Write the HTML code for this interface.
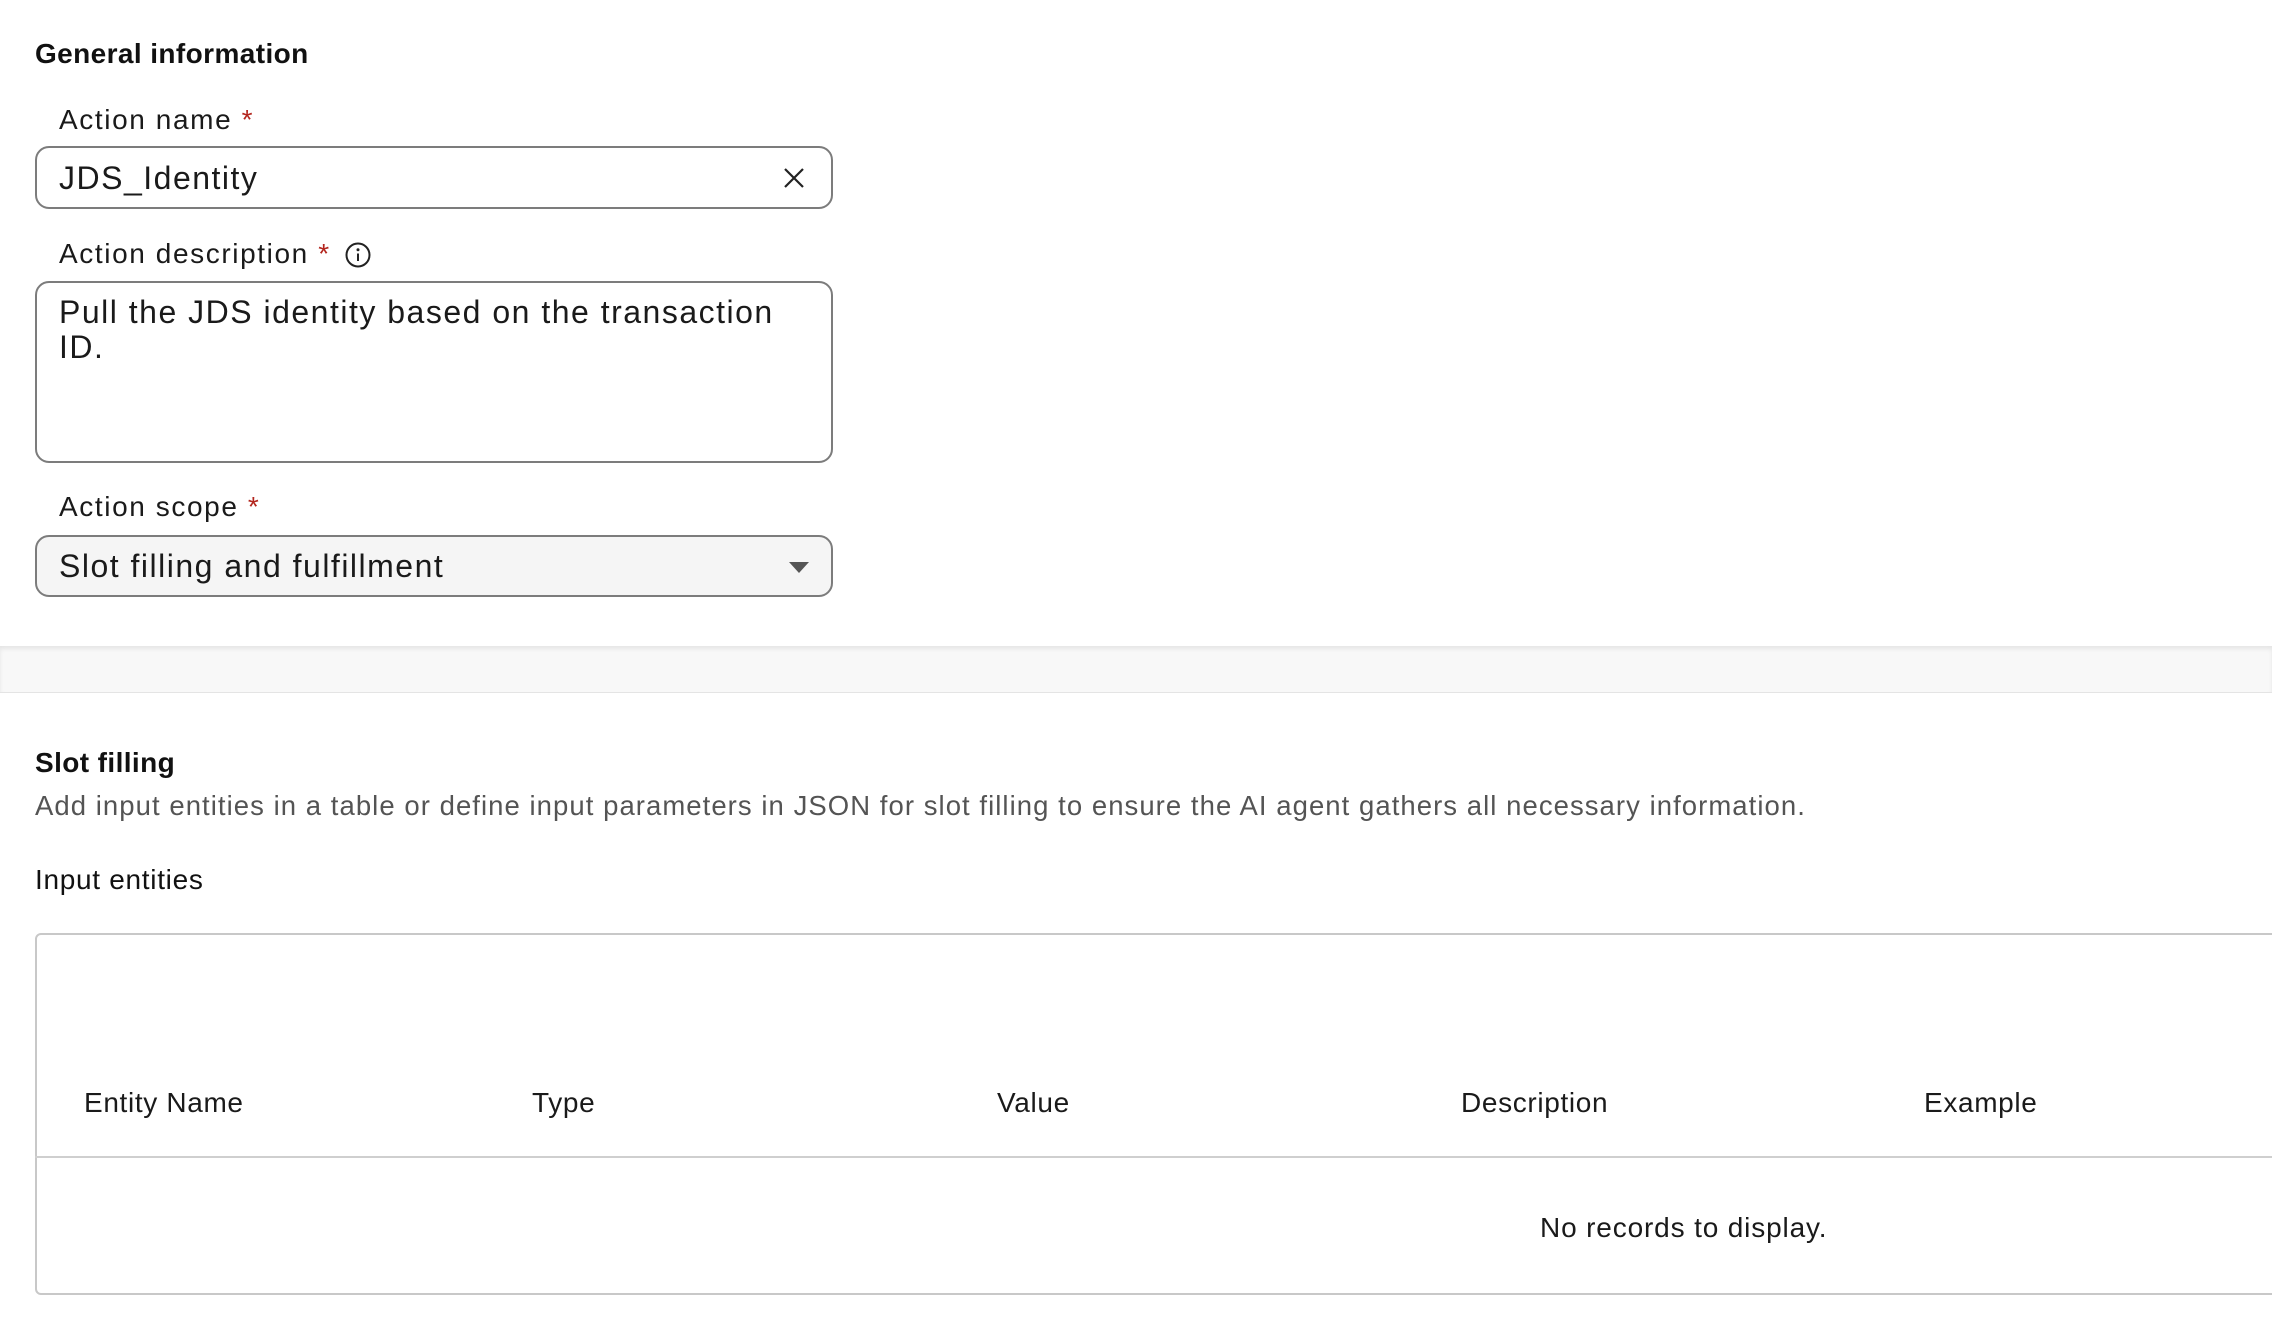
<!DOCTYPE html>
<html><head><meta charset="utf-8"><style>
*{box-sizing:border-box;margin:0;padding:0}
body{width:2272px;height:1332px;overflow:hidden;background:#fff;font-family:"Liberation Sans",sans-serif;color:#111;position:relative}
.a{position:absolute;white-space:nowrap}
.h{font-weight:bold;font-size:28px;letter-spacing:0.4px}
.lbl{font-size:28px;color:#1a1a1a;letter-spacing:1.6px}
.req{color:#b3261e}
.box{position:absolute;left:35px;width:798px;border:2px solid #7c7c7c;border-radius:14px;background:#fff}
.val{font-size:32px;color:#1a1a1a;letter-spacing:1.5px}
.th{font-size:28px;color:#1a1a1a;letter-spacing:0.65px}
</style></head><body>
<div class="a h" style="left:35px;top:38px">General information</div>

<div class="a lbl" style="left:59px;top:104px">Action name <span class="req">*</span></div>
<div class="box" style="top:146px;height:63px"></div>
<div class="a val" style="left:59px;top:160px">JDS_Identity</div>
<svg class="a" style="left:783px;top:167px" width="22" height="22" viewBox="0 0 22 22"><path d="M2 2L20 20M20 2L2 20" stroke="#222" stroke-width="2.2"/></svg>

<div class="a lbl" style="left:59px;top:238px">Action description <span class="req">*</span></div>
<svg class="a" style="left:344px;top:241px" width="28" height="28" viewBox="0 0 28 28"><circle cx="14" cy="14" r="11.5" fill="none" stroke="#222" stroke-width="2"/><circle cx="14" cy="8.8" r="1.5" fill="#222"/><path d="M14 12.5V20" stroke="#222" stroke-width="2"/></svg>
<div class="box" style="top:281px;height:182px"></div>
<div class="a val" style="left:59px;top:295px;line-height:35px">Pull the JDS identity based on the transaction<br>ID.</div>

<div class="a lbl" style="left:59px;top:491px">Action scope <span class="req">*</span></div>
<div class="box" style="top:535px;height:62px;background:#f5f5f5"></div>
<div class="a val" style="left:59px;top:548px">Slot filling and fulfillment</div>
<svg class="a" style="left:789px;top:562px" width="20" height="12" viewBox="0 0 20 12"><path d="M0 0H20L10 11Z" fill="#555"/></svg>

<div class="a" style="left:0;top:646px;width:2272px;height:47px;background:#f8f8f8;border-bottom:1px solid #e4e4e4;box-shadow:inset 0 3px 4px rgba(0,0,0,0.08)"></div>

<div class="a h" style="left:35px;top:747px">Slot filling</div>
<div class="a" style="left:35px;top:790px;font-size:27.5px;color:#545454;letter-spacing:1.05px">Add input entities in a table or define input parameters in JSON for slot filling to ensure the AI agent gathers all necessary information.</div>
<div class="a" style="left:35px;top:864px;font-size:28px;color:#111;letter-spacing:0.7px">Input entities</div>

<div class="a" style="left:35px;top:933px;width:2300px;height:362px;border:2px solid #c8c8c8;border-radius:6px"></div>
<div class="a" style="left:35px;top:1156px;width:2300px;height:2px;background:#cfcfcf"></div>
<div class="a th" style="left:84px;top:1087px">Entity Name</div>
<div class="a th" style="left:532px;top:1087px">Type</div>
<div class="a th" style="left:997px;top:1087px">Value</div>
<div class="a th" style="left:1461px;top:1087px">Description</div>
<div class="a th" style="left:1924px;top:1087px">Example</div>
<div class="a th" style="left:1540px;top:1212px;letter-spacing:0.85px">No records to display.</div>
</body></html>
